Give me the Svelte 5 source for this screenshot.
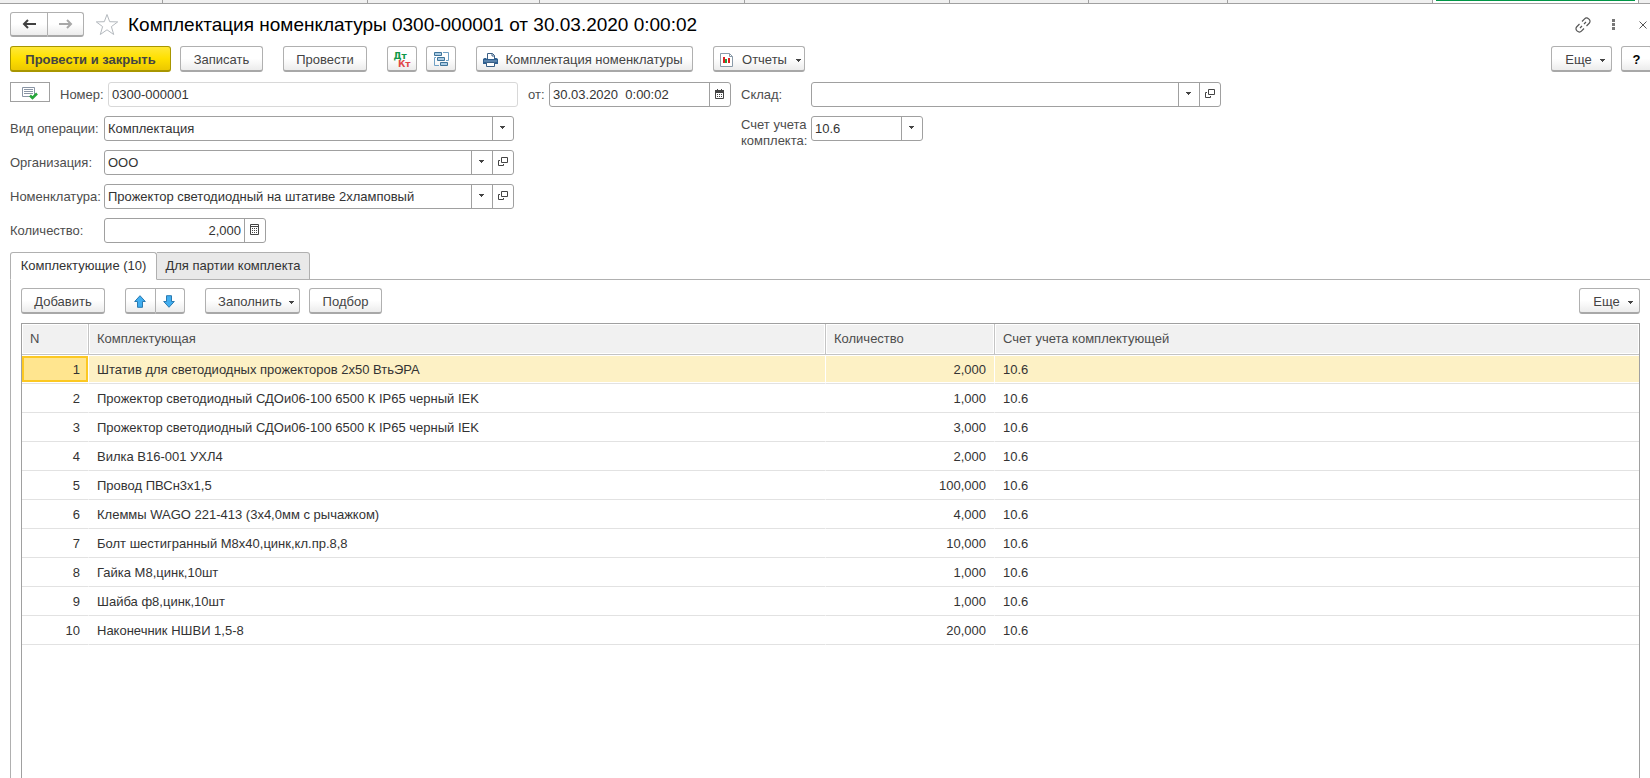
<script lang="ts">
    type Row = { name: string; qty: string; account: string };

    const windowTabs = [163, 205, 172, 205, 205, 139, 139, 205];

    const rows: Row[] = [
        { name: "Штатив для светодиодных прожекторов 2х50 ВтьЭРА", qty: "2,000", account: "10.6" },
        { name: "Прожектор светодиодный СДОи06-100 6500 К IP65 черный IEK", qty: "1,000", account: "10.6" },
        { name: "Прожектор светодиодный СДОи06-100 6500 К IP65 черный IEK", qty: "3,000", account: "10.6" },
        { name: "Вилка В16-001 УХЛ4", qty: "2,000", account: "10.6" },
        { name: "Провод ПВСн3х1,5", qty: "100,000", account: "10.6" },
        { name: "Клеммы WAGO 221-413 (3х4,0мм с рычажком)", qty: "4,000", account: "10.6" },
        { name: "Болт шестигранный М8х40,цинк,кл.пр.8,8", qty: "10,000", account: "10.6" },
        { name: "Гайка М8,цинк,10шт", qty: "1,000", account: "10.6" },
        { name: "Шайба ф8,цинк,10шт", qty: "1,000", account: "10.6" },
        { name: "Наконечник НШВИ 1,5-8", qty: "20,000", account: "10.6" },
    ];

    let selected = $state(0);
    let activeTab = $state(0);

    let docNumber = $state("0300-000001");
    let docDate = $state("30.03.2020  0:00:02");
    let warehouse = $state("");
    let quantity = $state("2,000");
</script>

{#snippet caret()}
    <svg class="caret" width="5" height="3" viewBox="0 0 5 3" aria-hidden="true">
        <path d="M0 0h5v1H4v1H3v1H2V2H1V1H0z" fill="#444" />
    </svg>
{/snippet}

{#snippet openIcon()}
    <svg width="10" height="9" viewBox="0 0 10 9" fill="none" stroke="#444" aria-hidden="true">
        <path d="M3.500.5h6v5h-6z" />
        <path d="M2 3.500H.5v5h5V7" />
    </svg>
{/snippet}

{#snippet dropdown(id: string, value: string)}
    <span class="dropdown">
        <select {id}>
            <option>{value}</option>
        </select>
        <span class="arrow">{@render caret()}</span>
    </span>
{/snippet}

<div class="window">
    <div class="window-tabs">
        {#each windowTabs as width}
            <span class="window-tab" style="width: {width}px"></span>
        {/each}
        <span class="window-tab current"></span>
        <span class="window-tab last"></span>
    </div>

    <header class="title-bar">
        <div class="group">
            <button class="btn nav back" aria-label="Назад">
                <svg width="14" height="10" viewBox="0 0 14 10" fill="none" stroke="#404040" stroke-width="2">
                    <path d="M14 5H2M6 1 2 5l4 4" />
                </svg>
            </button>
            <button class="btn nav" aria-label="Вперед">
                <svg width="14" height="10" viewBox="0 0 14 10" fill="none" stroke="#a8a8a8" stroke-width="2">
                    <path d="M0 5h12M8 1l4 4-4 4" />
                </svg>
            </button>
        </div>
        <button class="plain star" aria-label="В избранное">
            <svg width="24" height="23" viewBox="0 0 24 23" fill="#fff" stroke="#b4b9be">
                <path d="m12 1.500 2.700 7.200 8 .2-6.300 4.700 2.300 7.900L12 16.800l-6.700 4.700 2.300-7.900L1.300 8.900l8-.2z" />
            </svg>
        </button>
        <h1>Комплектация номенклатуры 0300-000001 от 30.03.2020 0:00:02</h1>
        <div class="window-tools">
            <button class="plain" aria-label="Получить ссылку">
                <svg width="16" height="16" viewBox="0 0 16 16" fill="none" stroke="#555" stroke-width="1.200">
                    <path d="m7 4.500 2.600-2.700a2.700 2.700 0 0 1 3.900 0l.7.600a2.700 2.700 0 0 1 0 3.900L11.500 9M9 11.500l-2.600 2.700a2.700 2.700 0 0 1-3.900 0l-.7-.6a2.700 2.700 0 0 1 0-3.900L4.500 7M5 11l2-2M9 7l2-2" />
                </svg>
            </button>
            <button class="plain" aria-label="Меню">
                <svg width="3" height="11" viewBox="0 0 3 11" fill="#777">
                    <path d="M0 0h3v3H0zM0 4h3v3H0zM0 8h3v3H0z" />
                </svg>
            </button>
            <button class="plain close" aria-label="Закрыть">
                <svg width="8" height="8" viewBox="0 0 8 8" fill="none" stroke="#555">
                    <path d="m.5.5 7 7m0-7-7 7" />
                </svg>
            </button>
        </div>
    </header>

    <div class="commands">
        <button class="btn primary">Провести и закрыть</button>
        <button class="btn write">Записать</button>
        <button class="btn post">Провести</button>
        <button class="btn icon-btn spaced" aria-label="Движения документа">
            <span class="dtkt"><span class="dt">Дт</span><span class="kt">Кт</span></span>
        </button>
        <button class="btn icon-btn" aria-label="Структура подчиненности">
            <svg width="15" height="15" viewBox="0 0 15 15" fill="#a9cbe3" stroke="#3d7399">
                <path d="M.5.5h7v3h-7zM3.500 5.500h7v3h-7zM6.500 10.500h7v3h-7z" />
                <path d="M9 .5h5.500v8H12M5 13.500H.5v-8H2" fill="none" stroke="#6fa0c4" />
            </svg>
        </button>
        <button class="btn print spaced">
            <svg width="15" height="14" viewBox="0 0 15 14">
                <path d="M4.500.5h5l2 2v4h-7z" fill="#fff" stroke="#3a5f85" />
                <path d="M9 .5V3h2.500" fill="none" stroke="#3a5f85" />
                <path d="M1.500 5h2v1h8V5h2L15 6v5H0V6z" fill="#2f5f8f" />
                <path d="M1 8h13" stroke="#88a9c8" />
                <path d="M3.500 9.500h8v4h-8z" fill="#fff" stroke="#3a5f85" />
            </svg>
            Комплектация номенклатуры
        </button>
        <button class="btn reports spaced">
            <svg width="13" height="14" viewBox="0 0 13 14">
                <path d="M.5.5h9l3 3v10H.5z" fill="#fff" stroke="#8a9aa8" />
                <path d="M9.500.5v3h3" fill="none" stroke="#8a9aa8" />
                <path d="M3 4h2v6H3z" fill="#e02020" />
                <path d="M5 6h2v4H5z" fill="#20a040" />
                <path d="M8 5h2v5H8z" fill="#e02020" />
            </svg>
            <span>Отчеты</span>
            {@render caret()}
        </button>
        <button class="btn more">Еще {@render caret()}</button>
        <button class="btn help">?</button>
    </div>

    <form class="form" onsubmit={(e) => e.preventDefault()}>
        <div class="col">
            <div class="row">
                <button type="button" class="status" aria-label="Документ проведен">
                    <svg width="16" height="13" viewBox="0 0 16 13" fill="none">
                        <path d="M.5.5h12v9H.5z" fill="#fff" stroke="#8995a5" />
                        <path d="M2 2.500h9M2 4.500h9M2 6.500h9" stroke="#8995a5" />
                        <path d="m8 8.500 2.500 2.500L15 6.500" stroke="#27a53a" stroke-width="2.500" />
                    </svg>
                </button>
                <label class="number-label" for="number">Номер:</label>
                <span class="field light"><input id="number" bind:value={docNumber} /></span>
            </div>
            <div class="row">
                <label class="main-label" for="operation">Вид операции:</label>
                <span class="field">{@render dropdown("operation", "Комплектация")}</span>
            </div>
            <div class="row">
                <label class="main-label" for="organization">Организация:</label>
                <span class="field">
                    {@render dropdown("organization", "ООО")}
                    <button type="button" class="cell" aria-label="Открыть">{@render openIcon()}</button>
                </span>
            </div>
            <div class="row">
                <label class="main-label" for="item">Номенклатура:</label>
                <span class="field">
                    {@render dropdown("item", "Прожектор светодиодный на штативе 2хламповый")}
                    <button type="button" class="cell" aria-label="Открыть">{@render openIcon()}</button>
                </span>
            </div>
            <div class="row">
                <label class="main-label" for="quantity">Количество:</label>
                <span class="field quantity">
                    <input id="quantity" class="num" bind:value={quantity} />
                    <button type="button" class="cell" aria-label="Калькулятор">
                        <svg width="9" height="11" viewBox="0 0 9 11">
                            <path d="M.5.5h8v10h-8zM1 2.500h7" fill="none" stroke="#444" />
                            <path d="M2 4h1v1H2zM4 4h1v1H4zM6 4h1v1H6zM2 6h1v1H2zM4 6h1v1H4zM6 6h1v1H6zM2 8h1v1H2zM4 8h1v1H4zM6 8h1v1H6z" fill="#444" />
                        </svg>
                    </button>
                </span>
            </div>
        </div>

        <div class="col">
            <div class="row">
                <label class="date-label" for="date">от:</label>
                <span class="field date">
                    <input id="date" bind:value={docDate} />
                    <button type="button" class="cell" aria-label="Календарь">
                        <svg width="9" height="10" viewBox="0 0 9 10">
                            <path d="M.5 1.500h8v8h-8z" fill="none" stroke="#444" />
                            <path d="M0 1h9v3H0zM2 0h1v1H2zM6 0h1v1H6z" fill="#444" />
                            <path d="M2 5h1v1H2zM4 5h1v1H4zM6 5h1v1H6zM2 7h1v1H2zM4 7h1v1H4zM6 7h1v1H6z" fill="#444" />
                        </svg>
                    </button>
                </span>
            </div>
        </div>

        <div class="col">
            <div class="row">
                <label class="side-label" for="warehouse">Склад:</label>
                <span class="field">
                    <input id="warehouse" bind:value={warehouse} />
                    <button type="button" class="cell" aria-label="Выбрать">{@render caret()}</button>
                    <button type="button" class="cell" aria-label="Открыть">{@render openIcon()}</button>
                </span>
            </div>
            <div class="row">
                <label class="side-label two-lines" for="account">Счет учета комплекта:</label>
                <span class="field account">{@render dropdown("account", "10.6")}</span>
            </div>
        </div>
    </form>

    <div class="tabs" role="tablist">
        <button class="tab" class:active={activeTab === 0} role="tab" aria-selected={activeTab === 0} onclick={() => (activeTab = 0)}>
            Комплектующие (10)
        </button>
        <button class="tab" class:active={activeTab === 1} role="tab" aria-selected={activeTab === 1} onclick={() => (activeTab = 1)}>
            Для партии комплекта
        </button>
        <span class="tabs-line"></span>
    </div>

    <section class="pane">
        <div class="table-commands">
            <button class="btn add">Добавить</button>
            <div class="group spaced">
                <button class="btn move up" aria-label="Вверх">
                    <svg width="12" height="13" viewBox="0 0 12 13" fill="#41aef0" stroke="#2a7ab0">
                        <path d="m6 .7 5.300 5.800H8.500v5.800h-5V6.500H.7z" />
                    </svg>
                </button>
                <button class="btn move" aria-label="Вниз">
                    <svg width="12" height="13" viewBox="0 0 12 13" fill="#41aef0" stroke="#2a7ab0">
                        <path d="M6 12.300.7 6.500h2.800V.7h5v5.800h2.800z" />
                    </svg>
                </button>
            </div>
            <button class="btn fill spaced">Заполнить {@render caret()}</button>
            <button class="btn pick">Подбор</button>
            <button class="btn more">Еще {@render caret()}</button>
        </div>

        <div class="table-box">
            <table>
                <colgroup>
                    <col class="c-num" />
                    <col class="c-name" />
                    <col class="c-qty" />
                    <col />
                </colgroup>
                <thead>
                    <tr>
                        <th>N</th>
                        <th>Комплектующая</th>
                        <th>Количество</th>
                        <th>Счет учета комплектующей</th>
                    </tr>
                </thead>
                <tbody>
                    {#each rows as row, i}
                        <tr class:selected={selected === i} onclick={() => (selected = i)}>
                            <td class="num">{i + 1}</td>
                            <td>{row.name}</td>
                            <td class="num">{row.qty}</td>
                            <td>{row.account}</td>
                        </tr>
                    {/each}
                </tbody>
            </table>
        </div>
    </section>
</div>

<style>
    :global(body) {
        margin: 0;
        background: #fff;
    }

    .window {
        display: flex;
        flex-direction: column;
        height: 100vh;
        overflow: hidden;
        font-family: "Liberation Sans", Arial, sans-serif;
        font-size: 13px;
        line-height: 16px;
        color: #333;
    }

    .window * {
        box-sizing: border-box;
    }

    button, input, select {
        font: inherit;
        color: inherit;
        margin: 0;
    }

    svg {
        flex: none;
        display: block;
    }

    .window-tabs {
        display: flex;
        flex: none;
        height: 4px;
        background: #f0f0f0;
    }

    .window-tab {
        flex: none;
        border-right: 1px solid #a0a0a0;
        border-bottom: 1px solid #a0a0a0;
    }

    .window-tab.current {
        width: 206px;
        padding: 0 3px 2px;
        background: linear-gradient(#009646, #009646) content-box, #fff;
    }

    .window-tab.last {
        flex: 1;
        border-right: none;
    }

    .title-bar {
        display: flex;
        align-items: center;
        flex: none;
        padding: 8px 3px 0 10px;
        height: 33px;
    }

    h1 {
        margin: 0 0 0 9px;
        font-size: 19px;
        font-weight: normal;
        line-height: 24px;
        color: #000;
        white-space: nowrap;
    }

    .plain {
        display: flex;
        padding: 0;
        border: none;
        background: none;
    }

    .star {
        margin-left: 11px;
    }

    .window-tools {
        display: flex;
        align-items: center;
        gap: 21px;
        margin-left: auto;
    }

    .close {
        margin-left: 3px;
    }

    .btn {
        display: flex;
        flex: none;
        align-items: center;
        justify-content: center;
        height: 26px;
        padding: 2px 0 0;
        border: 1px solid #b0b0b0;
        border-bottom: 2px solid #a8a8a8;
        border-radius: 3px;
        background: linear-gradient(#fff 50%, #ececec);
        color: #444;
        white-space: nowrap;
    }

    .group {
        display: flex;
        flex: none;
    }

    .group .btn:first-child {
        border-radius: 3px 0 0 3px;
    }

    .group .btn:last-child {
        border-left: none;
        border-radius: 0 3px 3px 0;
    }

    .btn.nav {
        width: 36px;
        height: 25px;
        padding: 0;
    }

    .btn.back {
        width: 38px;
    }

    .commands, .table-commands {
        display: flex;
        flex: none;
        gap: 9px;
    }

    .commands {
        padding: 9px 0 0 10px;
        overflow: hidden;
    }

    .spaced {
        margin-left: 11px;
    }

    .btn.primary {
        width: 161px;
        border-color: #a89600;
        background: linear-gradient(#ffe838, #ffe000 50%, #ecc800);
        font-weight: bold;
    }

    .write {
        width: 83px;
    }

    .post {
        width: 84px;
        margin-left: 11px;
    }

    .icon-btn {
        width: 30px;
    }

    .dtkt {
        display: flex;
        flex-direction: column;
        width: 17px;
        font-family: "DejaVu Sans", sans-serif;
        font-size: 9px;
        font-weight: bold;
        line-height: 8px;
    }

    .dt {
        align-self: flex-start;
        color: #109848;
    }

    .kt {
        align-self: flex-end;
        color: #e04848;
    }

    .print {
        width: 217px;
        gap: 8px;
        padding-right: 4px;
    }

    .reports {
        width: 92px;
        gap: 9px;
        padding-left: 3px;
    }

    .more {
        width: 61px;
        margin-left: auto;
        gap: 8px;
        padding-left: 7px;
    }

    .fill .caret, .more .caret, .reports .caret {
        margin-top: 1px;
    }

    .help {
        width: 31px;
        margin-right: -2px;
        color: #000;
        font-weight: bold;
    }

    .form {
        display: flex;
        gap: 10px;
        padding: 10px 10px 0;
    }

    .col {
        display: flex;
        flex-direction: column;
        gap: 9px;
    }

    .row {
        display: flex;
        height: 25px;
        color: #4d4d4d;
    }

    .row label {
        flex: none;
        line-height: 25px;
        white-space: nowrap;
    }

    .main-label {
        width: 94px;
    }

    .number-label {
        width: 48px;
        margin-left: 10px;
    }

    .date-label {
        width: 21px;
    }

    .side-label {
        width: 70px;
    }

    .row .two-lines {
        padding-top: 1px;
        line-height: 16px;
        white-space: normal;
    }

    .status {
        display: flex;
        align-items: center;
        justify-content: center;
        width: 40px;
        height: 20px;
        padding: 2px 0 0;
        border: 1px solid #a0a0a0;
        background: #fff;
    }

    .field {
        display: flex;
        width: 410px;
        height: 25px;
        border: 1px solid #a0a0a0;
        border-radius: 3px;
        color: #333;
    }

    .field.light {
        border-color: #d8d8d8;
    }

    .field.date {
        width: 182px;
    }

    .field.account {
        width: 112px;
    }

    .field.quantity {
        width: 162px;
    }

    .field input, .field select {
        flex: 1;
        min-width: 0;
        padding: 0 3px;
        border: none;
        outline: none;
        background: none;
    }

    .field select {
        grid-area: 1 / 1 / 2 / 3;
        appearance: none;
    }

    .dropdown {
        display: grid;
        flex: 1;
        grid-template-columns: 1fr 21px;
    }

    .arrow, .cell {
        display: flex;
        flex: none;
        align-items: center;
        justify-content: center;
        width: 21px;
        padding: 0 1px 2px 0;
        border: none;
        border-left: 1px solid #a0a0a0;
        background: none;
    }

    .arrow {
        grid-area: 1 / 2;
        pointer-events: none;
    }

    .num, input.num {
        text-align: right;
    }

    .tabs {
        display: flex;
        flex: none;
        padding: 9px 0 0 10px;
    }

    .tab {
        width: 153px;
        height: 28px;
        padding: 0;
        border: 1px solid #b0b0b0;
        border-left: none;
        border-radius: 0 3px 0 0;
        background: #e9e9e9;
        white-space: nowrap;
    }

    .tab:first-child {
        width: 147px;
        border-left: 1px solid #b0b0b0;
        border-radius: 3px 3px 0 0;
    }

    .tab.active {
        border-bottom-color: #fff;
        background: #fff;
    }

    .tabs-line {
        flex: 1;
        border-bottom: 1px solid #b0b0b0;
    }

    .pane {
        display: flex;
        flex: 1;
        flex-direction: column;
        min-height: 0;
        margin-left: 10px;
        padding: 8px 10px 0;
        border-left: 1px solid #b0b0b0;
    }

    .add {
        width: 84px;
    }

    .move {
        width: 29px;
        padding: 1px 2px 0 0;
    }

    .move.up {
        width: 31px;
    }

    .fill {
        width: 95px;
        gap: 7px;
        padding-left: 7px;
    }

    .pick {
        width: 73px;
    }

    .table-box {
        flex: 1;
        min-height: 0;
        margin-top: 9px;
        border: 1px solid #a0a0a0;
        border-bottom: none;
    }

    table {
        width: 100%;
        border-spacing: 0;
        table-layout: fixed;
    }

    .c-num {
        width: 67px;
    }

    .c-name {
        width: 737px;
    }

    .c-qty {
        width: 169px;
    }

    th {
        height: 31px;
        padding: 0 8px;
        border-right: 1px solid #c4c4c4;
        border-bottom: 1px solid #c4c4c4;
        background: #f1f1f1;
        box-shadow: inset 0 0 0 1px #fff;
        color: #4d4d4d;
        font-weight: normal;
        text-align: left;
    }

    td {
        height: 29px;
        padding: 1px 8px 0;
        border-bottom: 1px solid #e2e2e2;
        border-right: 1px solid transparent;
        white-space: nowrap;
    }

    th:last-child, td:last-child {
        border-right: none;
    }

    .selected td {
        border-right-color: #fff;
        background: #fdf1c5;
        box-shadow: inset 0 1px #fff, inset 0 -1px #fff;
    }

    .selected td:first-child {
        background: #ffe58f;
        box-shadow: inset 0 1px #fff, inset 0 -1px #fff, inset 2px 0 #fcc822, inset -2px 0 #fcc822,
            inset 0 3px #fcc822, inset 0 -3px #fcc822;
    }
</style>
